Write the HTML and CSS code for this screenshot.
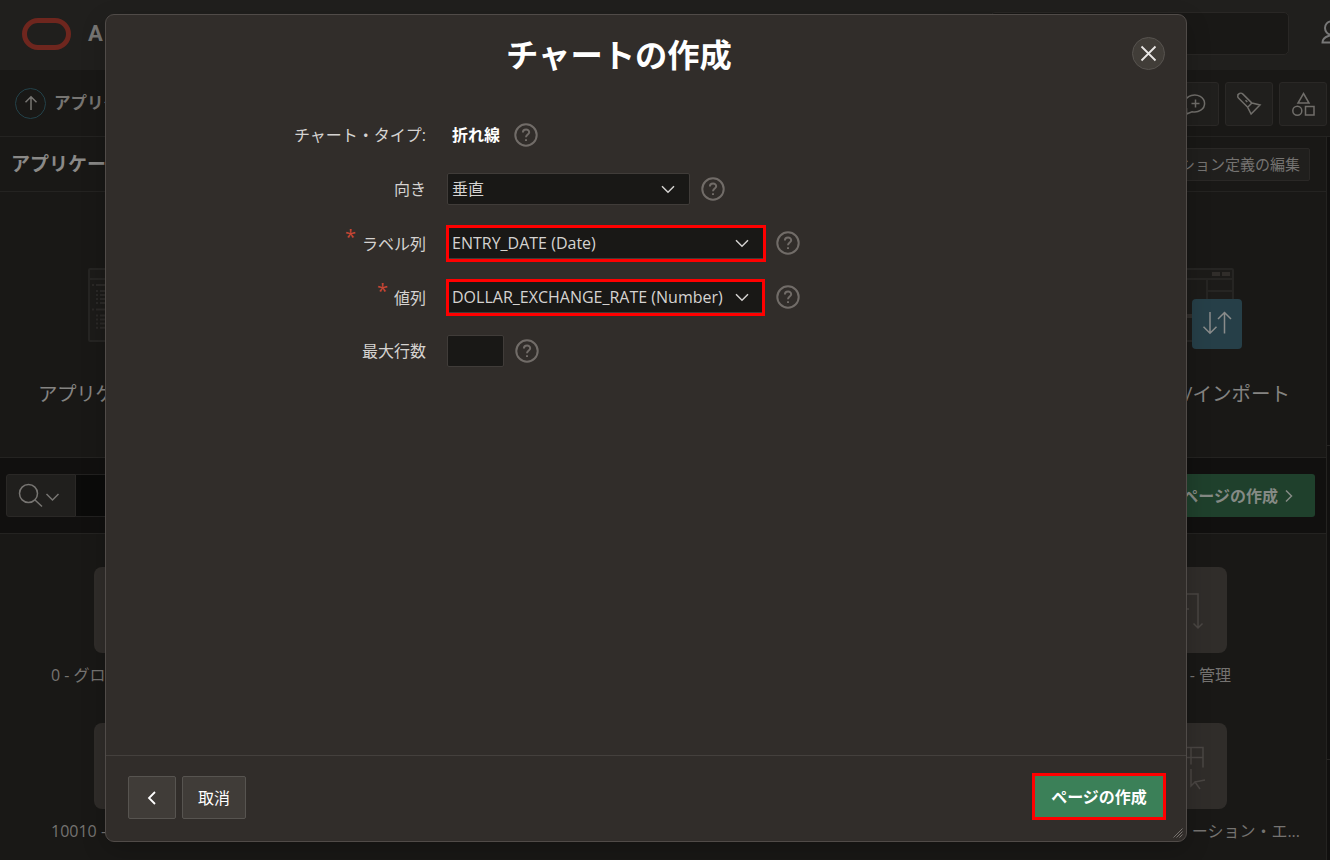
FILE: index.html
```html
<!DOCTYPE html>
<html lang="ja">
<head>
<meta charset="utf-8">
<title>チャートの作成</title>
<link rel="stylesheet" href="styles.css">
</head>
<body>
<div class="page">
  <header class="topbar">
    <div class="brand">
      <span class="brand-ring"></span>
      <span class="brand-name">A</span>
    </div>
    <div class="topbar-end">
      <div class="global-search"></div>
      <svg class="user" width="30" height="30" viewBox="0 0 30 30"><path d="M11 4.500a6 6.500 0 0 0 0 13M11 17.500c-1 2-8.500 1.500-8.500 8h17"/></svg>
    </div>
  </header>

  <div class="crumbs">
    <div class="crumb-start">
      <span class="up"><svg width="28" height="28" viewBox="0 0 28 28"><path d="M14 21V8M8.500 13.200L14 7.700l5.500 5.500"/></svg></span>
      <span class="crumb-text">アプリケ</span>
    </div>
    <div class="crumb-tools">
      <span class="tool"><svg width="30" height="30" viewBox="0 0 30 30"><path d="M6.500 25v-5.500a10 8.500 0 1 1 5.500 3.200zM15.500 10.500v8M11.500 14.500h8"/></svg></span>
      <span class="tool"><svg width="30" height="30" viewBox="0 0 30 30"><path d="M4.600 5.100c1.300-1.300 3-1.300 4.300 0l9 9-4.200 4.200-9-9c-1.300-1.300-1.300-3 0-4.200zM17.900 14.100l8.100 1.900-8.900 9-3.400-6.700M11.500 11.200l1.800 1.800"/></svg></span>
      <span class="tool"><svg width="30" height="30" viewBox="0 0 30 30"><path d="M15.500 4.500l5.500 9.500H10zM17.500 17.500h8.500v8.500h-8.500z"/><circle cx="9.300" cy="21.800" r="4.500"/></svg></span>
    </div>
  </div>

  <div class="main">
    <div class="app-head">
      <span class="app-title">アプリケー</span>
      <span class="edit-btn">ション定義の編集</span>
    </div>

    <div class="shortcuts">
      <div class="shortcut shortcut-first">
        <svg class="mini-page" width="100" height="74" viewBox="0 0 100 74">
          <rect class="frame" x="1" y="1" width="98" height="72" rx="1"/>
          <path class="frame" d="M1 11h98"/>
          <path class="row" d="M4 17h2M8 17h20M4 41.500h2M8 41.500h20"/>
          <path class="row" d="M8 23h2M12 23h16M8 27h2M12 27h16M8 31h2M12 31h16M8 35h2M12 35h16M8 47.500h2M12 47.500h16M8 51.500h2M12 51.500h16M8 55.500h2M12 55.500h16M8 59.700h2M12 59.700h16"/>
        </svg>
        <span class="shortcut-name">アプリケ</span>
      </div>
      <div class="shortcut shortcut-last">
        <div class="import-art">
          <svg class="mini-page" width="100" height="74" viewBox="0 0 100 74">
            <rect class="frame" x="1" y="1" width="98" height="72" rx="1"/>
            <path class="frame" d="M1 11h98M73 11v40M73 23h26"/>
            <path class="block" d="M78 6h8M88 6h8M45 48h15"/>
          </svg>
          <span class="import-badge"><svg width="50" height="50" viewBox="0 0 50 50"><path d="M18 13v21M11.500 27.700L18 34.200l6.500-6.500M32.500 34.500V13M26 20l6.500-6.500L39 20"/></svg></span>
        </div>
        <span class="shortcut-name">/インポート</span>
      </div>
    </div>

    <div class="toolbar">
      <div class="find">
        <span class="find-btn"><svg width="68" height="41" viewBox="0 0 68 41"><circle cx="21.500" cy="18.500" r="9"/><path d="M28 25l7 6.500M39.500 19l6 6 6-6"/></svg></span>
        <span class="find-input"></span>
      </div>
      <span class="page-btn">ページの作成<svg width="10" height="14" viewBox="0 0 10 14"><path d="M2 1.500L7.500 7 2 12.500"/></svg></span>
    </div>

    <div class="cards">
      <div class="card-row">
        <div class="card"><span class="tile"></span><span class="card-name">0 - グロ</span></div>
        <div class="card card-end">
          <span class="tile"><svg width="86" height="86" viewBox="0 0 86 86"><path d="M30 27h27v34M52.500 56.500l4.500 4.500 4.500-4.500M36 36h10M36 42h12M36 48h10"/></svg></span>
          <span class="card-name name-admin">- 管理</span>
        </div>
      </div>
      <div class="card-row">
        <div class="card"><span class="tile"></span><span class="card-name">10010 -</span></div>
        <div class="card card-end">
          <span class="tile"><svg width="86" height="86" viewBox="0 0 86 86"><path d="M28 24.500h34v20M28 34.500h34M50 24.500v17M50 46v17l4-4 5 7M54 59l10-2z"/></svg></span>
          <span class="card-name name-error">ーション・エ...</span>
        </div>
      </div>
    </div>
  </div>
  <aside class="side"><div class="side-a"></div><div class="side-b"></div><div class="side-c"></div></aside>
</div>

<section class="dialog">
  <header class="dialog-head">
    <h1 class="dialog-title">チャートの作成</h1>
    <button class="close" type="button"><svg width="31" height="31" viewBox="0 0 31 31"><path d="M8.500 8.500l14 14M22.500 8.500l-14 14"/></svg></button>
  </header>
  <div class="form">
    <div class="field">
      <span class="label">チャート・タイプ:</span>
      <span class="static">折れ線</span>
      <svg class="help" viewBox="0 0 24 24"><circle cx="12" cy="12" r="10.700"/><path d="M8.900 9.600c0-4 6.300-4 6.300-.3 0 2.300-3.200 2.300-3.200 5M12 16.300v1.800"/></svg>
    </div>
    <div class="field">
      <span class="label">向き</span>
      <span class="select select-short">垂直<svg class="caret" viewBox="0 0 14 9"><path d="M1 1.200l6 6 6-6"/></svg></span>
      <svg class="help" viewBox="0 0 24 24"><circle cx="12" cy="12" r="10.700"/><path d="M8.900 9.600c0-4 6.300-4 6.300-.3 0 2.300-3.200 2.300-3.200 5M12 16.300v1.800"/></svg>
    </div>
    <div class="field">
      <span class="label"><span class="required">*</span>ラベル列</span>
      <span class="select select-marked"><span class="latin date">ENTRY_DATE (Date)</span><svg class="caret" viewBox="0 0 14 9"><path d="M1 1.200l6 6 6-6"/></svg></span>
      <svg class="help" viewBox="0 0 24 24"><circle cx="12" cy="12" r="10.700"/><path d="M8.900 9.600c0-4 6.300-4 6.300-.3 0 2.300-3.200 2.300-3.200 5M12 16.300v1.800"/></svg>
    </div>
    <div class="field">
      <span class="label"><span class="required">*</span>値列</span>
      <span class="select select-marked select-value"><span class="latin rate">DOLLAR_EXCHANGE_RATE (Number)</span><svg class="caret" viewBox="0 0 14 9"><path d="M1 1.200l6 6 6-6"/></svg></span>
      <svg class="help" viewBox="0 0 24 24"><circle cx="12" cy="12" r="10.700"/><path d="M8.900 9.600c0-4 6.300-4 6.300-.3 0 2.300-3.200 2.300-3.200 5M12 16.300v1.800"/></svg>
    </div>
    <div class="field">
      <span class="label">最大行数</span>
      <span class="select select-tiny"></span>
      <svg class="help" viewBox="0 0 24 24"><circle cx="12" cy="12" r="10.700"/><path d="M8.900 9.600c0-4 6.300-4 6.300-.3 0 2.300-3.200 2.300-3.200 5M12 16.300v1.800"/></svg>
    </div>
  </div>
  <footer class="dialog-foot">
    <div class="foot-start">
      <button class="btn btn-back" type="button"><svg width="10" height="14" viewBox="0 0 10 14"><path d="M8 1L2 7l6 6"/></svg></button>
      <button class="btn btn-cancel" type="button">取消</button>
    </div>
    <button class="btn-create" type="button">ページの作成</button>
  </footer>
  <svg class="grip" width="10" height="10" viewBox="0 0 10 10"><path d="M.5 9.500l9-9M3.500 9.500l6-6M6.500 9.500l3-3"/></svg>
</section>
</body>
</html>
```

FILE: styles.css
```css
* { box-sizing: border-box; }

body {
  margin: 0;
  width: 1330px;
  height: 860px;
  overflow: hidden;
  background: #191816;
  color: #757371;
  font: 16px/24px "Open Sans", "Noto Sans CJK JP", sans-serif;
}

svg { display: block; fill: none; stroke: currentColor; stroke-width: 1.5; flex: none; }
button { font: inherit; color: inherit; padding: 0; }

.page {
  display: grid;
  grid-template: 70px 67px 723px / 1327px 3px;
  height: 860px;
  overflow: hidden;
}

.topbar {
  grid-column: 1 / 3;
  display: flex;
  justify-content: space-between;
  background: #201f1d;
}
.brand { display: flex; align-items: center; gap: 17px; padding: 0 0 2px 22px; }
.brand-ring { width: 49px; height: 32px; border: 5.500px solid #6e261e; border-radius: 16px; }
.brand-name { font: bold 22px/26px Roboto, sans-serif; color: #777674; }
.topbar-end { display: flex; padding-top: 12px; gap: 31px; width: 342px; }
.global-search { flex: none; width: 299px; height: 43px; margin-left: 2px; border: 1px solid #292725; border-radius: 5px; background: #191816; }
.user { margin-top: 5px; color: #777; stroke-width: 2; }

.crumbs {
  grid-column: 1 / 3;
  display: flex;
  justify-content: space-between;
  border-bottom: 1px solid #242321;
}
.crumb-start { display: flex; align-items: center; gap: 8px; padding-left: 15px; }
.up { width: 31px; height: 31px; padding: .5px; border: 1px solid #23424a; border-radius: 50%; color: #777572; }
.crumb-text { width: 80px; font-weight: bold; font-size: 16.500px; white-space: nowrap; color: #777572; }
.crumb-tools { display: flex; gap: 6px; padding: 12px 3px 0 0; }
.tool { width: 48px; height: 44px; display: flex; align-items: center; justify-content: center; border: 1px solid #2a2826; border-radius: 3px; background: #201f1d; color: #706e6a; }

.main { border-right: 1px solid #242321; }
.app-head {
  display: flex;
  align-items: center;
  justify-content: space-between;
  height: 55px;
  padding: 0 16px 0 11px;
  border-bottom: 1px solid #242321;
}
.app-title { font-size: 19px; font-weight: bold; color: #8a8987; }
.edit-btn { width: 180px; height: 33px; padding-right: 9px; border: 1px solid #2a2826; border-radius: 2px; background: #201f1d; text-align: right; font-size: 15px; line-height: 31px; }

.shortcuts {
  display: flex;
  justify-content: space-between;
  height: 266px;
  padding: 76px 36px 0 38px;
  border-bottom: 1px solid #242321;
}
.shortcut { display: flex; flex-direction: column; gap: 38px; }
.shortcut-first { padding-left: 50px; }
.shortcut-first .shortcut-name { margin-left: -50px; }
.shortcut-last { align-items: flex-end; }
.shortcut-name { font-size: 19.500px; line-height: 28px; color: #858482; letter-spacing: -.4px; }
.shortcut-last .shortcut-name { letter-spacing: 0; }
.mini-page .frame { stroke: #262523; stroke-width: 2; fill: #1c1b19; }
.mini-page .row { stroke: #2b2927; stroke-width: 2; }
.mini-page .block { stroke: #302d2a; stroke-width: 4; }
.import-art { position: relative; width: 108px; height: 74px; margin-right: 49px; }
.import-badge { position: absolute; left: 58px; top: 31px; border-radius: 4px; background: #263f48; color: #8a8c8b; }
.shortcut-last .import-art { margin-right: 48px; }

.toolbar {
  display: flex;
  justify-content: space-between;
  height: 76px;
  padding: 16px 11px 0 6px;
  border-bottom: 1px solid #242321;
  background: #11100f;
}
.find { display: flex; height: 43px; }
.find-btn { width: 70px; border: 1px solid #2a2826; border-radius: 3px 0 0 3px; background: #201f1d; color: #777572; }
.find-input { width: 60px; border: solid #222120; border-width: 1px 0; background: #0b0b0a; }
.page-btn { display: flex; align-items: center; gap: 6px; height: 43px; padding: 0 21px 0 12px; border-radius: 3px; background: #1f402c; color: #858a85; font-weight: bold; }

.cards { display: flex; flex-direction: column; padding: 33px 0 0; }
.card-row { display: flex; justify-content: space-between; height: 156px; }
.card { display: flex; flex-direction: column; gap: 10px; padding-left: 51px; }
.card .tile { width: 86px; height: 86px; margin-left: 43px; border-radius: 8px; background: #302d2a; color: #4a4643; }
.card-end { align-items: flex-end; padding: 0 25px 0 0; }
.card-end .tile { margin: 0 74px 0 0; }
.name-admin { margin-right: 70px; }
.name-error { margin-right: 1px; }

.side { display: grid; grid-template-rows: 309px 314px 1fr; background: #11100f; }
.side-a, .side-b { border-bottom: 1px solid #272523; }

.dialog {
  position: absolute;
  left: 105px;
  top: 14px;
  width: 1082px;
  height: 828px;
  display: flex;
  flex-direction: column;
  border: 1px solid #504b48;
  border-radius: 9px;
  background: #312d2a;
  box-shadow: 0 8px 24px rgba(0, 0, 0, .2);
  color: #d5d3d1;
}
.dialog-head { display: flex; align-items: center; height: 77px; padding-right: 21px; }
.dialog-title { flex: 1; margin: 0; text-align: center; font-size: 32.300px; line-height: 44px; color: #fff; }
.close { width: 33px; height: 33px; border: 1px solid #57534f; border-radius: 50%; background: #413d38; color: #e8e6e4; }
.close svg { stroke-width: 1.800; }

.form { flex: 1; padding-top: 16px; }
.field { display: flex; align-items: center; height: 54px; }
.label { width: 320px; margin-right: 21px; text-align: right; }
.required { display: inline-block; margin-right: 6px; color: #c74634; font-size: 20px; line-height: 12px; vertical-align: 6px; }
.static { margin-left: 5px; margin-right: 14px; font-weight: bold; color: #fff; }
.help { width: 24px; height: 24px; margin-left: 11px; color: #716c68; stroke-width: 2; }
.static + .help { margin-left: 0; }
.select { display: flex; align-items: center; justify-content: space-between; height: 32px; padding: 0 14px 0 4px; border: 1px solid #403c39; border-radius: 2px; background: #191816; }
.select-short { width: 243px; }
.select-marked { width: 320px; height: 37px; margin-left: -1px; padding-left: 3px; padding-right: 14px; border: 3px solid #f00; border-radius: 0; box-shadow: inset 0 -1px #403c39; }
.select-marked + .help { margin-left: 10px; }
.select-value { width: 319px; padding-right: 13px; }
.select-value + .help { margin-left: 11px; }
.select-tiny { width: 57px; }
.latin { white-space: nowrap; }
.caret { width: 14px; height: 9px; }

.dialog-foot {
  display: flex;
  align-items: flex-start;
  justify-content: space-between;
  height: 86px;
  padding: 17px 20px 0 22px;
  border-top: 1px solid #44403d;
}
.foot-start { display: flex; gap: 6px; padding-top: 3px; }
.btn { display: flex; align-items: center; justify-content: center; height: 43px; border: 1px solid #575450; border-radius: 2px; background: #403c38; color: #fff; }
.btn svg { stroke-width: 1.800; }
.btn-back { width: 48px; }
.btn-cancel { width: 64px; }
.btn-create { width: 134px; height: 47px; border: 3px solid #f00; background: #3b8058; color: #fff; font-weight: bold; }
.grip { position: absolute; right: 3px; bottom: 3px; color: #77726e; stroke-width: 1; }
```
